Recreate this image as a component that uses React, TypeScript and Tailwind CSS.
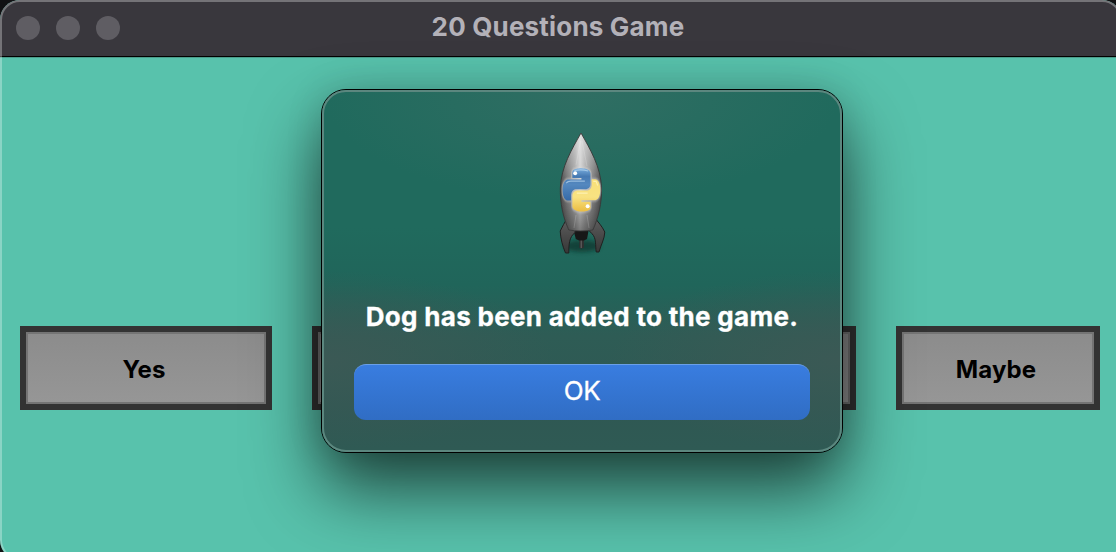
const SNAKE =
  "M14.25.18l.9.2.73.26.59.3.45.32.34.34.25.34.16.33.1.3.04.26.02.2-.01.13V8.5l-.05.63-.13.55-.21.46-.26.38-.3.31-.33.25-.35.19-.35.14-.33.1-.3.07-.26.04-.21.02H8.77l-.69.05-.59.14-.5.22-.41.27-.33.32-.27.35-.2.36-.15.37-.1.35-.07.32-.04.27-.02.21v3.06H3.17l-.21-.03-.28-.07-.32-.12-.35-.18-.36-.26-.36-.36-.35-.46-.32-.59-.28-.73-.21-.88-.14-1.05-.05-1.23.06-1.22.16-1.04.24-.87.32-.71.36-.57.4-.44.42-.33.42-.24.4-.16.36-.1.32-.05.24-.01h.16l.06.01h8.16v-.83H6.18l-.01-2.75-.02-.37.05-.34.11-.31.17-.28.25-.26.31-.23.38-.2.44-.18.51-.15.58-.12.64-.1.71-.06.77-.04.84-.02 1.27.05z";

function Rocket() {
  return (
    <svg width="80" height="140" viewBox="0 0 80 140" className="mr-1 block" aria-hidden="true">
      <defs>
        <linearGradient id="hull" x1="0" x2="1" y1="0" y2="0">
          <stop offset="0" stopColor="#4e4e4e" />
          <stop offset="0.16" stopColor="#7c7c7c" />
          <stop offset="0.36" stopColor="#aaaaaa" />
          <stop offset="0.48" stopColor="#d2d2d2" />
          <stop offset="0.6" stopColor="#b0b0b0" />
          <stop offset="0.8" stopColor="#858585" />
          <stop offset="1" stopColor="#4e4e4e" />
        </linearGradient>
        <linearGradient id="light" x1="0" x2="0" y1="0" y2="1">
          <stop offset="0" stopColor="#fff" stopOpacity="0.4" />
          <stop offset="0.45" stopColor="#fff" stopOpacity="0" />
          <stop offset="0.65" stopColor="#000" stopOpacity="0.05" />
          <stop offset="1" stopColor="#000" stopOpacity="0.42" />
        </linearGradient>
        <linearGradient id="fin" x1="0" x2="0" y1="0" y2="1">
          <stop offset="0" stopColor="#5e5e5e" />
          <stop offset="0.5" stopColor="#4a4a4a" />
          <stop offset="1" stopColor="#373737" />
        </linearGradient>
        <linearGradient id="blue" x1="0" x2="0" y1="0" y2="1">
          <stop offset="0" stopColor="#7aaede" />
          <stop offset="0.25" stopColor="#4679b2" />
          <stop offset="0.5" stopColor="#5488bf" />
          <stop offset="1" stopColor="#3569a6" />
        </linearGradient>
        <linearGradient id="yellow" x1="0" x2="0" y1="1" y2="0">
          <stop offset="0" stopColor="#f8df78" />
          <stop offset="0.55" stopColor="#f8e282" />
          <stop offset="1" stopColor="#ebbd42" />
        </linearGradient>
        <filter id="soft" x="-50%" y="-50%" width="200%" height="200%">
          <feGaussianBlur stdDeviation="2" />
        </filter>
        <filter id="glow" x="-30%" y="-30%" width="160%" height="160%">
          <feGaussianBlur stdDeviation="0.5" />
        </filter>
      </defs>
      <ellipse cx="42" cy="122" rx="18" ry="6" fill="#0b3029" opacity="0.7" filter="url(#soft)" />
      <path d="M39.3 112h4.6v12h-1.6l-.7 1.2-.7-1.2h-1.6z" fill="#303030" />
      <path d="M41.2 116v8" stroke="#777" strokeWidth="0.8" />
      <path d="M33 104h16l-2 11-3 1.500h-5L35.800 115z" fill="#171717" />
      <path d="M27 94.500c-2 4-5 8-6.800 12.500C20.600 115 22.600 122 25.500 129h3.300c0-8 .2-16 6.300-20.500L35 104z" fill="url(#fin)" stroke="#202020" strokeWidth="1" />
      <path d="M55 94c3 4 7 8 9.800 14-.2 7-4 13-5.800 20h-2.800c-1-6 .5-14-4.400-18.500L47.500 105z" fill="url(#fin)" stroke="#202020" strokeWidth="1" />
      <path d="M41 9C32 25 21 43 20.300 64c-.2 15 2.500 29 8.500 42 7 1.300 17 1.300 24 0 6-13 9-27 8.700-42C61 43 50 25 41 9z" fill="url(#hull)" />
      <path d="M41 9C32 25 21 43 20.300 64c-.2 15 2.500 29 8.500 42 7 1.300 17 1.300 24 0 6-13 9-27 8.700-42C61 43 50 25 41 9z" fill="url(#light)" stroke="#383838" strokeWidth="0.9" />
      <path d="M40.500 17L36 41M42 17l5 25M36 91l-2 13M47 91l2 13" stroke="#fff" strokeWidth="1" opacity="0.16" />
      <g transform="translate(22.700 44.300) scale(1.560 1.800)">
        <g fill="none" stroke="#ddd" strokeWidth="1.400" opacity="0.5" filter="url(#glow)">
          <path d={SNAKE} />
          <path d={SNAKE} transform="rotate(180 12 12)" />
        </g>
        <path d={SNAKE} fill="url(#blue)" />
        <path d={SNAKE} transform="rotate(180 12 12)" fill="url(#yellow)" />
        <path d="M7.500 1.300q4.500-1 8.800.2M2.200 8.200q1-1.100 3-1.100h9" fill="none" stroke="#c1ddf3" strokeWidth="0.7" opacity="0.65" />
        <path d="M19.600 7.200h1.800l1 2.300M9 13.800h7" fill="none" stroke="#fff7c4" strokeWidth="0.7" opacity="0.7" />
        <ellipse cx="8" cy="2.800" rx="1.250" ry="1.100" fill="#fff" />
        <ellipse cx="16" cy="21.100" rx="1.250" ry="1.100" fill="#fff" />
      </g>
    </svg>
  );
}

function Answer({ label, size }: { label?: string; size: string }) {
  return (
    <button className={`${size} h-[84px] shrink-0 border-[6px] border-[#333333] bg-[#747474] p-0.5`}>
      <span className="flex h-full items-center justify-center bg-linear-to-b from-[#8c8c8c] to-[#969696] pt-1 pr-1 text-[24px] font-bold tracking-[0.1px] text-black">
        {label}
      </span>
    </button>
  );
}

export default function App() {
  return (
    <div className="relative h-[552px] w-[1116px] overflow-hidden bg-[#111113] font-['Inter','Liberation_Sans',sans-serif]">
      <div className="flex h-[560px] w-[1122px] flex-col overflow-hidden rounded-[20px] bg-[#58c2ac]">
        <header className="grid h-[57px] shrink-0 grid-cols-[1fr_auto_1fr] items-center border-b border-black bg-[#39373d] pr-[22px] pl-4">
          <div className="flex gap-4">
            <i className="size-6 rounded-full bg-[#5f5d63]" />
            <i className="size-6 rounded-full bg-[#5f5d63]" />
            <i className="size-6 rounded-full bg-[#5f5d63]" />
          </div>
          <h1 className="pb-0.5 text-[26px] leading-8 font-bold tracking-[0.18px] text-[#b3b1b8]">20 Questions Game</h1>
        </header>
        <main className="flex flex-1 gap-10 border-t border-[#4b9c8b] px-5 pt-[268px]">
          <Answer label="Yes" size="w-[252px]" />
          <Answer size="w-[252px]" />
          <Answer size="w-[252px]" />
          <Answer label="Maybe" size="w-[204px]" />
        </main>
      </div>
      <div className="pointer-events-none absolute top-0 left-0 h-[560px] w-[1122px] rounded-[20px] border-2 border-white/30" />
      <section
        role="dialog"
        className="absolute top-[89px] left-[321px] h-[364px] w-[522px] rounded-[25px] border border-black bg-[#206a5d] shadow-[0_36px_70px_rgba(0,0,0,0.65),0_0_36px_rgba(0,0,0,0.14)]"
      >
        <div className="flex h-full flex-col items-center overflow-hidden rounded-[24px] border-2 border-[#5c877f] bg-[radial-gradient(ellipse_260px_110px_at_50%_0%,#306e63_0%,transparent_100%),radial-gradient(ellipse_230px_90px_at_0%_75%,#3b5955_0%,transparent_100%),radial-gradient(ellipse_230px_90px_at_100%_75%,#3b5955_0%,transparent_100%),linear-gradient(180deg,#206a5d_0%,#206a5d_38%,#20655a_54%,#2e5c55_68%,#2f5853_88%,#2f5a54_100%)] pt-8">
          <Rocket />
          <p className="mt-[37px] text-[26px] leading-8 font-bold tracking-[0.3px] whitespace-nowrap text-white [-webkit-text-stroke:0.3px_white]">Dog has been added to the game.</p>
          <button className="mt-[31px] h-14 w-[456px] shrink-0 rounded-xl border-t border-[#6a9fe8] bg-linear-to-b from-[#397de0] to-[#306dc4] pb-1 text-[26px] tracking-[-0.4px] text-white [-webkit-text-stroke:0.3px_white]">
            OK
          </button>
        </div>
      </section>
    </div>
  );
}
